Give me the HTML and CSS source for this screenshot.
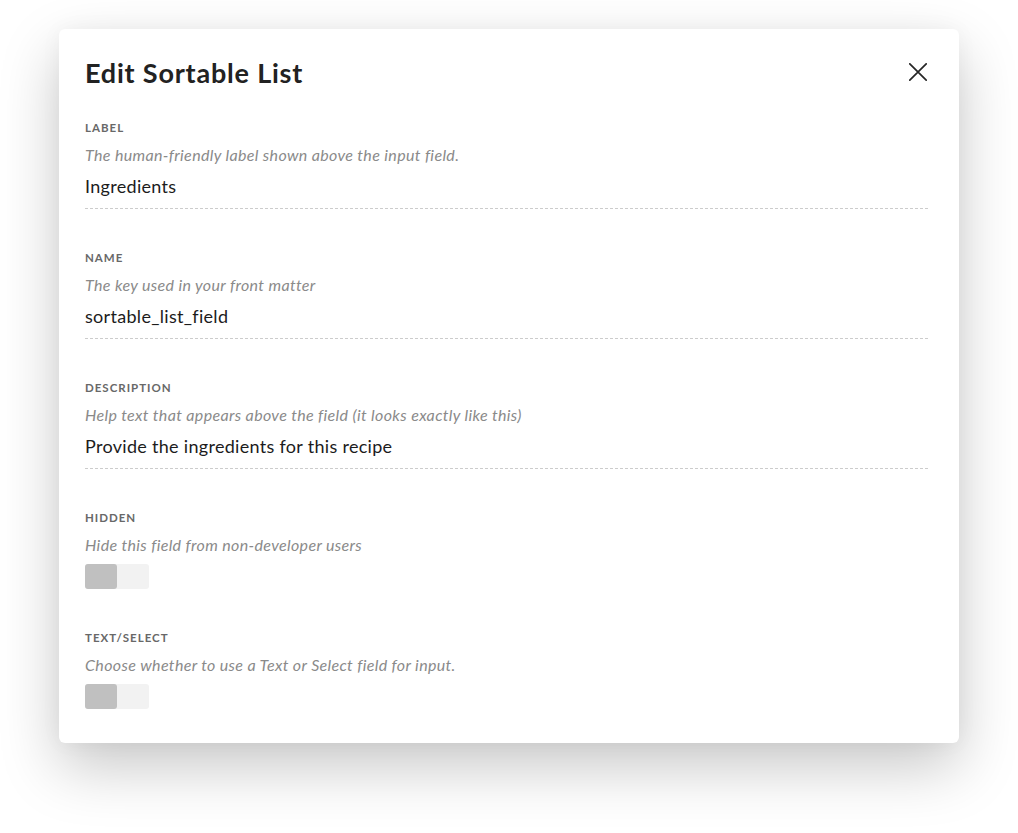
FILE: index.html
```html
<!DOCTYPE html>
<html lang="en">
<head>
<meta charset="utf-8">
<title>Edit Sortable List</title>
<link rel="stylesheet" href="styles.css">
</head>
<body>
<div class="stage">
  <div class="modal">
    <div class="modal-header">
      <h1 class="modal-title">Edit Sortable List</h1>
      <button class="close-btn" aria-label="Close">
        <svg width="18" height="18" viewBox="0 0 18 18"><path d="M0.8 0.8 L17.2 17.2 M17.2 0.8 L0.8 17.2" stroke="#262626" stroke-width="1.7" fill="none" stroke-linecap="round"/></svg>
      </button>
    </div>

    <div class="field">
      <div class="field-label">Label</div>
      <div class="field-help">The human-friendly label shown above the input field.</div>
      <div class="field-input">Ingredients</div>
    </div>

    <div class="field">
      <div class="field-label">Name</div>
      <div class="field-help">The key used in your front matter</div>
      <div class="field-input">sortable_list_field</div>
    </div>

    <div class="field">
      <div class="field-label">Description</div>
      <div class="field-help">Help text that appears above the field (it looks exactly like this)</div>
      <div class="field-input">Provide the ingredients for this recipe</div>
    </div>

    <div class="field">
      <div class="field-label">Hidden</div>
      <div class="field-help">Hide this field from non-developer users</div>
      <div class="toggle"><span class="toggle-knob"></span></div>
    </div>

    <div class="field">
      <div class="field-label">Text/Select</div>
      <div class="field-help">Choose whether to use a Text or Select field for input.</div>
      <div class="toggle"><span class="toggle-knob"></span></div>
    </div>
  </div>
</div>
</body>
</html>
```

FILE: styles.css
```css
* { box-sizing: border-box; }
html, body {
  margin: 0;
  padding: 0;
  background: #ffffff;
  font-family: Lato, "Open Sans", sans-serif;
}
.stage {
  padding: 29px 59px 90px 59px;
}
.modal {
  width: 900px;
  height: 714px;
  background: #ffffff;
  border-radius: 6px;
  box-shadow: 0 24px 60px rgba(0, 0, 0, 0.22), 0 0 22px rgba(0, 0, 0, 0.04);
  padding: 28px 31px 0 26px;
}
.modal-header {
  display: flex;
  justify-content: space-between;
  align-items: flex-start;
  margin-bottom: 31px;
}
.modal-title {
  margin: 0;
  font-size: 27px;
  line-height: 32px;
  font-weight: 700;
  color: #222222;
  letter-spacing: 0.8px;
}
.close-btn {
  border: 0;
  background: none;
  padding: 0;
  margin: 6px 1px 0 0;
  width: 18px;
  height: 18px;
  cursor: pointer;
}
.close-btn svg { display: block; }
.field {
  margin-bottom: 41px;
}
.field-label {
  font-size: 11.5px;
  line-height: 16px;
  font-weight: 700;
  color: #686868;
  text-transform: uppercase;
  letter-spacing: 1px;
}
.field-help {
  margin-top: 8px;
  font-size: 16px;
  line-height: 22px;
  font-style: italic;
  color: #8a8a8a;
  letter-spacing: 0.35px;
}
.field-input {
  margin-top: 7px;
  font-size: 18px;
  line-height: 26px;
  color: #1c1c1c;
  letter-spacing: 0.3px;
  padding-bottom: 9px;
  border-bottom: 1px dashed #cccccc;
}
.toggle {
  margin-top: 8px;
  width: 64px;
  height: 25px;
  background: #f2f2f2;
  border-radius: 3px;
  display: flex;
}
.toggle-knob {
  width: 32px;
  height: 25px;
  background: #c0c0c0;
  border-radius: 3px;
}
```
